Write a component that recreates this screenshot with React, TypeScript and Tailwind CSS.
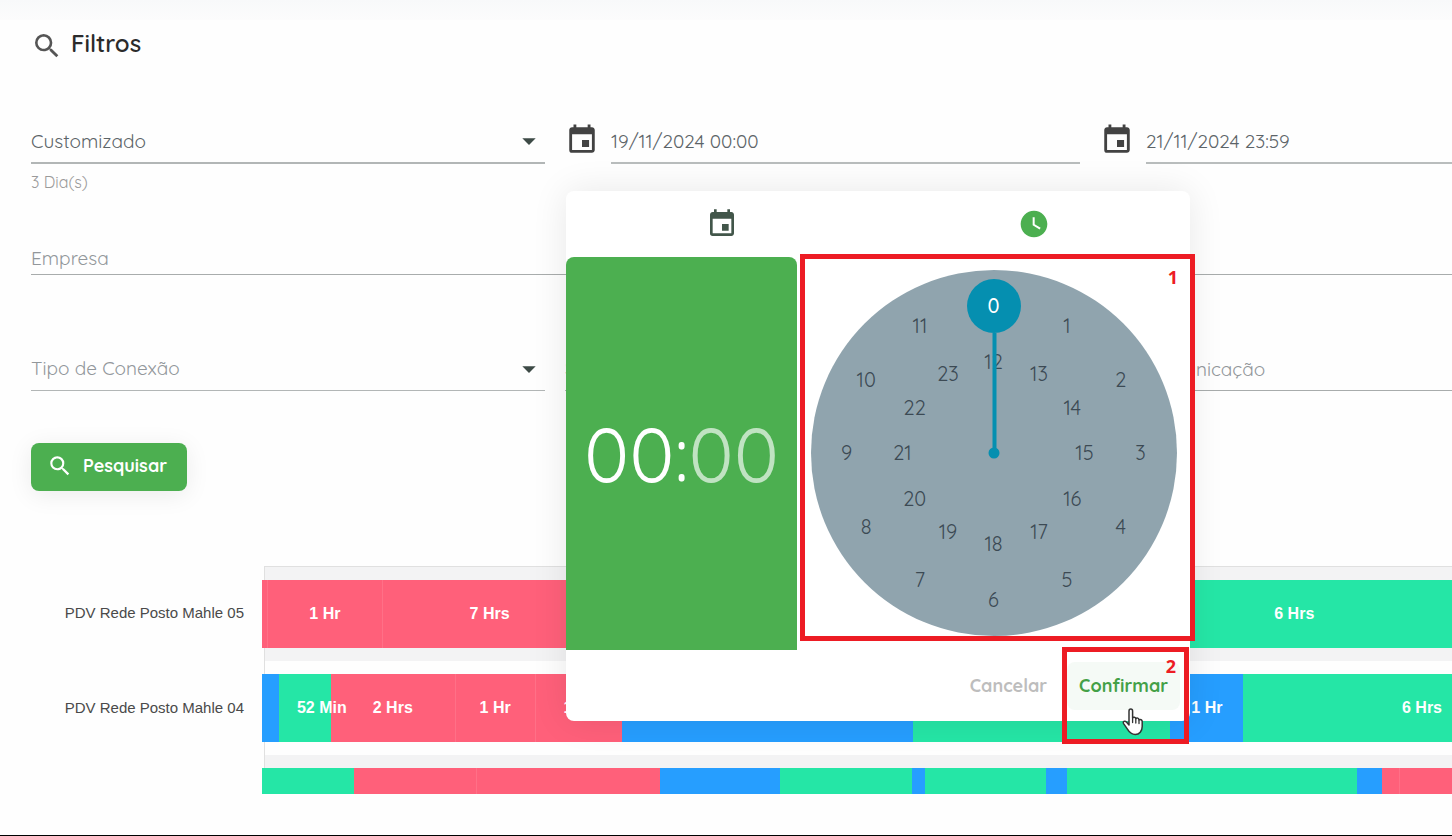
import React, { useState } from 'react';
import { MdArrowDropDown, MdEvent, MdSearch, MdWatchLater } from 'react-icons/md';
import { clsx } from 'clsx';

type Status = 'offline' | 'online' | 'idle';

interface Segment {
  size: number;
  status: Status;
  label?: string;
  align?: 'start' | 'end';
}

const statusColors: Record<Status, string> = {
  offline: 'bg-[#ff607a]',
  online: 'bg-[#25e6a6]',
  idle: 'bg-[#269eff]',
};

const pdvs: { name: string; segments: Segment[] }[] = [
  {
    name: 'PDV Rede Posto Mahle 05',
    segments: [
      { size: 5, status: 'offline' },
      { size: 114, status: 'offline', label: '1 Hr' },
      { size: 214, status: 'offline', label: '7 Hrs' },
      { size: 541, status: 'idle' },
      { size: 316, status: 'online', label: '6 Hrs' },
    ],
  },
  {
    name: 'PDV Rede Posto Mahle 04',
    segments: [
      { size: 17, status: 'idle' },
      { size: 52, status: 'online', label: '52 Min', align: 'start' },
      { size: 124, status: 'offline', label: '2 Hrs' },
      { size: 79, status: 'offline', label: '1 Hr' },
      { size: 87, status: 'offline', label: '1 Hr' },
      { size: 291, status: 'idle' },
      { size: 258, status: 'online' },
      { size: 73, status: 'idle', label: '1 Hr' },
      { size: 209, status: 'online', label: '6 Hrs', align: 'end' },
    ],
  },
  {
    name: '',
    segments: [
      { size: 92, status: 'online' },
      { size: 122, status: 'offline' },
      { size: 184, status: 'offline' },
      { size: 120, status: 'idle' },
      { size: 132, status: 'online' },
      { size: 13, status: 'idle' },
      { size: 121, status: 'online' },
      { size: 21, status: 'idle' },
      { size: 291, status: 'online' },
      { size: 25, status: 'idle' },
      { size: 17, status: 'offline' },
      { size: 52, status: 'offline' },
    ],
  },
];

export default function App() {
  return (
    <div className="min-h-screen flex flex-col overflow-x-hidden bg-[#fefefe] border-b border-black font-['Quicksand','Lato',sans-serif] text-[#333]">
      <div className="h-5 bg-linear-to-b from-[#f8f9fa] to-[#fcfcfc]" />

      <main className="flex-1">
        <section className="pl-[31px] pt-2.5">
          <header className="flex items-center gap-2">
            <MdSearch size={32} className="text-[#555]" />
            <h1 className="pb-1.5 text-2xl leading-[26px] font-semibold text-[#2b2b2b]">Filtros</h1>
          </header>

          <form onSubmit={(e) => e.preventDefault()}>
            <div className="mt-[58px] grid grid-cols-[514fr_515fr_352fr] gap-x-5">
              <div>
                <SelectField label="Período" value="Customizado" className="h-11 border-b-2" filled />
                <p className="mt-1.5 text-base leading-6 text-[#9a9a9a]">3 Dia(s)</p>
              </div>
              <div className="relative self-start">
                <DateField label="Data inicial" value="19/11/2024 00:00" />
                <TimePicker />
              </div>
              <DateField label="Data final" value="21/11/2024 23:59" />
            </div>

            <TextField label="Empresa" className="mt-[49px] h-8 pb-0.5" />

            <div className="mt-[76px] grid grid-cols-[514fr_515fr_352fr] gap-x-5">
              <SelectField label="Tipo de Conexão" value="Tipo de Conexão" className="h-10 border-b pb-1" />
              <SelectField label="Status" value="Status" className="h-10 border-b pb-1" />
              <TextField label="Sem Comunicação" className="h-10 pb-1" />
            </div>

            <button
              type="submit"
              className="mt-[52px] flex h-12 w-[156px] items-center gap-2.5 rounded-lg bg-[#4caf50] pb-0.5 pl-4 text-lg font-bold text-white shadow-[0_4px_24px_rgba(0,0,0,0.08)]"
            >
              <MdSearch size={26} />
              Pesquisar
            </button>
          </form>
        </section>

        <section className="mt-[75px] font-['Liberation_Sans',Arial,sans-serif]">
          {pdvs.map((pdv, i) => (
            <TimelineRow key={i} {...pdv} first={i === 0} striped={i % 2 === 0} last={i === pdvs.length - 1} />
          ))}
        </section>
      </main>
    </div>
  );
}

const SelectField = ({ label, value, className, filled }: { label: string; value: string; className: string; filled?: boolean }) => (
  <div className={clsx('flex items-center border-[#b2b6b6]', className)}>
    <select
      aria-label={label}
      defaultValue={value}
      className={clsx(
        'min-w-0 flex-1 appearance-none bg-transparent text-[19px] outline-none',
        filled ? 'text-[#5c6468]' : 'text-[#92979b]'
      )}
    >
      <option>{value}</option>
    </select>
    <MdArrowDropDown size={32} className="text-[#3d4a46]" />
  </div>
);

const TextField = ({ label, className }: { label: string; className: string }) => (
  <input
    type="text"
    aria-label={label}
    placeholder={label}
    className={clsx(
      'block w-full min-w-0 border-b border-[#a8acac] bg-transparent text-[19px] outline-none placeholder:text-[#92979b]',
      className
    )}
  />
);

const DateField = ({ label, value }: { label: string; value: string }) => (
  <div className="flex h-11 items-center gap-3">
    <MdEvent size={34} className="mb-1 shrink-0 text-[#424242]" />
    <input
      type="text"
      aria-label={label}
      defaultValue={value}
      className="h-11 w-full min-w-0 border-b-2 border-[#b9bdbd] bg-transparent text-[19px] text-[#5c6468] outline-none"
    />
  </div>
);

/* Date and time popup, open on the hour view */
const TimePicker = () => {
  const [hour, setHour] = useState(0);

  return (
    <div role="dialog" aria-label="Selecionar horário" className="absolute top-full left-px z-10 mt-[27px] w-[624px] rounded-lg bg-white shadow-[0_0_36px_rgba(0,0,0,0.09)]">
      <div className="grid h-[66px] grid-cols-2">
        <button type="button" aria-label="Data" className="flex items-center justify-center text-[#42564a]">
          <MdEvent size={32} />
        </button>
        <button type="button" aria-label="Hora" className="flex items-center justify-center text-[#4caf50]">
          <MdWatchLater size={32} />
        </button>
      </div>

      <div className="flex h-[393px]">
        <div className="flex w-[231px] items-center justify-center rounded-t-lg bg-[#4caf50] text-[76px] leading-none text-white">
          <span>{String(hour).padStart(2, '0')}</span>
          <span>:</span>
          <span className="text-white/65">00</span>
        </div>
        <div className="relative flex flex-1 justify-center pt-[13px]">
          <ClockFace hour={hour} onChange={setHour} />
          <Marker text="1" className="-top-[3px] -right-[5px] bottom-[9px] left-[3px] pt-1 pr-3" />
        </div>
      </div>

      <footer className="relative flex h-[71px] items-center justify-end gap-2 pr-2.5 text-lg font-bold">
        <button type="button" className="h-12 px-3 text-[#bdbdbd]">Cancelar</button>
        <button type="button" className="h-12 rounded-lg bg-[#f5faf6] px-3 text-[#43a047]">Confirmar</button>
        <Marker text="2" className="-top-[3px] right-px -bottom-[23px] left-[496px] pr-2" />
        <HandCursor />
      </footer>
    </div>
  );
};

const ClockFace = ({ hour, onChange }: { hour: number; onChange: (h: number) => void }) => {
  const angle = (hour % 12) * 30;
  const length = hour < 12 ? 147 : 91;

  return (
    <div className="relative size-[366px] rounded-full bg-[#90a4ae]">
      {Array.from({ length: 24 }, (_, h) => {
        const rad = ((h % 12) * Math.PI) / 6;
        const r = h < 12 ? 147 : 91;
        return (
          <button
            key={h}
            type="button"
            onClick={() => onChange(h)}
            className={clsx(
              'absolute flex size-[54px] -translate-1/2 items-center justify-center rounded-full text-xl',
              h === hour ? 'bg-[#058fb0] font-medium text-white' : 'text-[#3c4a54]'
            )}
            style={{ left: 183 + Math.sin(rad) * r, top: 183 - Math.cos(rad) * r }}
          >
            {h}
          </button>
        );
      })}
      <svg viewBox="-183 -183 366 366" className="pointer-events-none absolute inset-0" fill="#058fb0">
        <g transform={`rotate(${angle})`}>
          <rect x="-1.5" y={27 - length} width="4" height={length - 27} />
          <circle r="5.5" />
        </g>
      </svg>
    </div>
  );
};

const Marker = ({ text, className }: { text: string; className: string }) => (
  <div
    className={clsx(
      "pointer-events-none absolute border-5 border-[#ed1c24] text-right font-['Open_Sans',sans-serif] text-lg font-bold text-[#ed1c24]",
      className
    )}
  >
    {text}
  </div>
);

const HandCursor = () => (
  <svg width="22" height="28" viewBox="0 0 22 28" className="pointer-events-none absolute top-[58px] left-[556px]">
    <path
      d="M7 17V3.2C7 .4 10.6.4 10.6 3.2V10C11.4 8.6 13.6 9 13.8 10.6C14.8 9.6 16.8 10 17 11.8C18.4 11 20.2 11.8 20.2 13.6V18.5C20.2 23 17.4 26.5 13.2 26.5C9.2 26.5 7.4 24.4 5.6 21.4L1.6 15.6C.4 13.6 2.8 12.4 4.4 14L7 17Z"
      fill="#fff"
      stroke="#333"
      strokeWidth="1.5"
      strokeLinejoin="round"
    />
    <path d="M10.6 10V14.5M13.8 10.6V15M17 11.8V15.5" stroke="#333" strokeWidth="1.3" strokeLinecap="round" />
  </svg>
);

const TimelineRow = ({ name, segments, first, striped, last }: { name: string; segments: Segment[]; first: boolean; striped: boolean; last: boolean }) => (
  <div className="flex">
    <div className="flex w-[262px] shrink-0 items-center justify-end pr-[18px] text-[15px] text-[#4a4a4a]">{name}</div>
    <div
      className={clsx(
        'ml-0.5 min-w-0 flex-1 border-l border-[#e0e0e0] pt-[13px]',
        first && 'border-t',
        striped && 'bg-[#f3f3f4]',
        !last && 'pb-[13px]'
      )}
    >
      <div className={clsx('-ml-[3px] flex text-base font-bold text-white', last ? 'h-[26px]' : 'h-[68px]')}>
        {segments.map((s, i) => (
          <div
            key={i}
            className={clsx(
              'flex min-w-0 basis-0 items-center whitespace-nowrap',
              statusColors[s.status],
              i > 0 && s.status === segments[i - 1].status && 'border-l border-white/10',
              s.align === 'start' ? 'z-1 justify-start' : s.align === 'end' ? 'justify-end' : 'justify-center'
            )}
            style={{ flexGrow: s.size }}
          >
            <span className={clsx(s.align === 'start' && 'pl-[18px]', s.align === 'end' && 'pr-2.5')}>{s.label}</span>
          </div>
        ))}
      </div>
    </div>
  </div>
);
